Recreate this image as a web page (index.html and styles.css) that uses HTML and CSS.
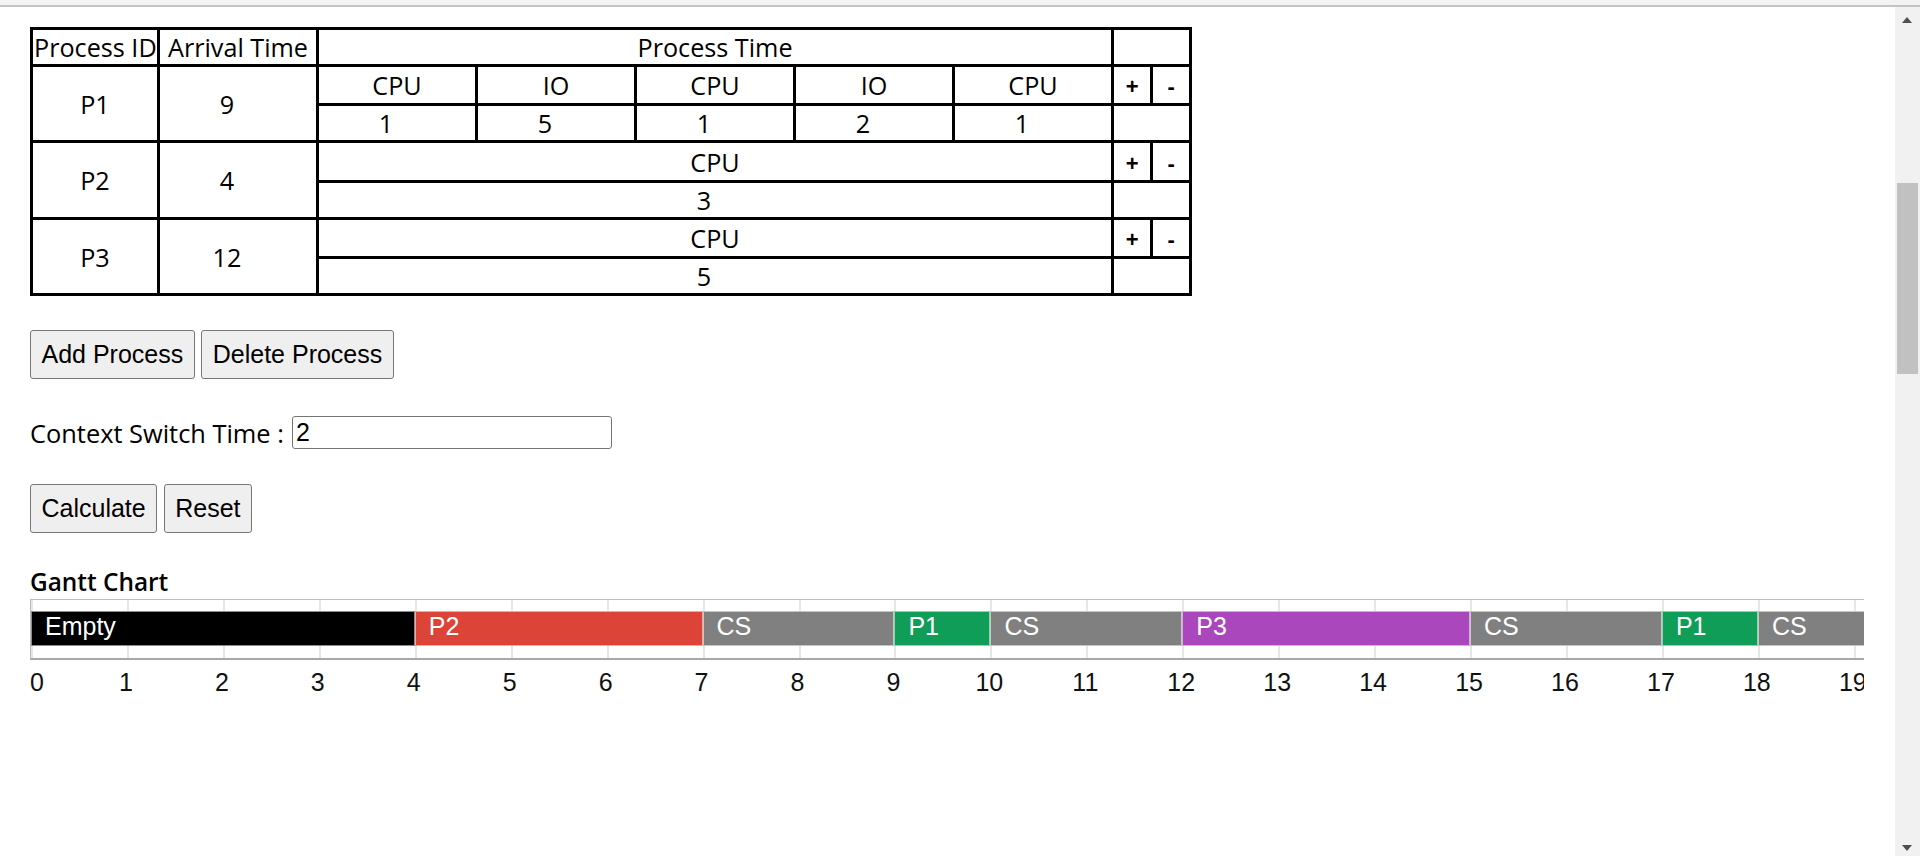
FILE: index.html
```html
<!DOCTYPE html>
<html lang="en">
<head>
<meta charset="utf-8">
<title>CPU Scheduling</title>
<link rel="stylesheet" href="styles.css">
</head>
<body>
<div class="topbar"></div>
<main class="page">
  <table class="proc-table">
    <colgroup>
      <col class="c-id"><col class="c-at">
      <col class="c-pt"><col class="c-pt"><col class="c-pt"><col class="c-pt"><col class="c-pt">
      <col class="c-pm"><col class="c-pm">
    </colgroup>
    <tr class="r-head"><td>Process ID</td><td>Arrival Time</td><td colspan="5">Process Time</td><td colspan="2"></td></tr>
    <tr class="r-type"><td rowspan="2">P1</td><td rowspan="2" class="num">9</td><td>CPU</td><td>IO</td><td>CPU</td><td>IO</td><td>CPU</td><td class="pm">+</td><td class="pm">-</td></tr>
    <tr class="r-val"><td class="num">1</td><td class="num">5</td><td class="num">1</td><td class="num">2</td><td class="num">1</td><td colspan="2"></td></tr>
    <tr class="r-type r-tall"><td rowspan="2">P2</td><td rowspan="2" class="num">4</td><td colspan="5">CPU</td><td class="pm">+</td><td class="pm">-</td></tr>
    <tr class="r-val"><td colspan="5" class="num">3</td><td colspan="2"></td></tr>
    <tr class="r-type"><td rowspan="2">P3</td><td rowspan="2" class="num">12</td><td colspan="5">CPU</td><td class="pm">+</td><td class="pm">-</td></tr>
    <tr class="r-val"><td colspan="5" class="num">5</td><td colspan="2"></td></tr>
  </table>

  <div class="btn-row row-proc">
    <button class="btn">Add Process</button>
    <button class="btn">Delete Process</button>
  </div>

  <div class="cs-row">
    <label class="cs-label" for="cs">Context Switch Time :</label>
    <input id="cs" class="cs-input" type="text" value="2">
  </div>

  <div class="btn-row row-calc">
    <button class="btn">Calculate</button>
    <button class="btn">Reset</button>
  </div>

  <h3 class="gantt-title">Gantt Chart</h3>
  <div class="gantt-clip">
    <div class="gantt-inner">
      <div class="gantt-frame">
        <div class="bars">
          <div class="bar b-empty" style="width:383.76px">Empty</div>
          <div class="bar b-p2" style="width:287.82px">P2</div>
          <div class="bar b-cs" style="width:191.88px">CS</div>
          <div class="bar b-p1" style="width:95.94px">P1</div>
          <div class="bar b-cs" style="width:191.88px">CS</div>
          <div class="bar b-p3" style="width:287.82px">P3</div>
          <div class="bar b-cs" style="width:191.88px">CS</div>
          <div class="bar b-p1" style="width:95.94px">P1</div>
          <div class="bar b-cs" style="width:191.88px">CS</div>
          <div class="bar b-p3" style="width:191.88px">P3</div>
        </div>
      </div>
      <div class="axis">
        <span class="tick first">0</span>
        <span class="tick">1</span><span class="tick">2</span><span class="tick">3</span><span class="tick">4</span>
        <span class="tick">5</span><span class="tick">6</span><span class="tick">7</span><span class="tick">8</span>
        <span class="tick">9</span><span class="tick">10</span><span class="tick">11</span><span class="tick">12</span>
        <span class="tick">13</span><span class="tick">14</span><span class="tick">15</span><span class="tick">16</span>
        <span class="tick">17</span><span class="tick">18</span><span class="tick">19</span><span class="tick">20</span>
        <span class="tick">21</span>
      </div>
    </div>
  </div>
</main>

<div class="vscroll" aria-hidden="true">
  <div class="arrow-up"></div>
  <div class="thumb"></div>
  <div class="arrow-down"></div>
</div>
</body>
</html>
```

FILE: styles.css
```css
* { box-sizing: border-box; }

html, body {
  margin: 0;
  padding: 0;
  height: 100%;
  overflow: hidden;
  background: #fff;
}

body {
  font-family: "Open Sans", "Noto Sans", sans-serif;
  font-size: 25.2px;
  color: #000;
}

.topbar {
  height: 7px;
  background: #f3f3f3;
  border-bottom: 2px solid #c4c4c4;
}

.page {
  padding: 20px 0 0 30px;
}

/* ---------- process table ---------- */
.proc-table {
  border-collapse: collapse;
  table-layout: fixed;
  width: 1161px;
}

.c-id { width: 127px; }
.c-at { width: 159px; }
.c-pt { width: 159px; }
.c-pm { width: 39px; }

.proc-table td {
  border: 3px solid #000;
  padding: 0 1px;
  text-align: center;
  vertical-align: middle;
  line-height: 30px;
  white-space: nowrap;
}

.proc-table td.num {
  padding-right: 23px;
}

.r-head { height: 37px; }
.r-type { height: 39px; }
.r-tall { height: 40px; }
.r-val  { height: 37px; }

.proc-table td.pm {
  font-family: "Liberation Sans", Arial, sans-serif;
  font-weight: 700;
  font-size: 22px;
  padding-top: 4px;
}

/* ---------- controls ---------- */
.btn-row {
  display: flex;
  gap: 6.5px;
}

.row-proc { margin-top: 34px; }
.row-calc { margin-top: 35px; }

.btn {
  font-family: "Liberation Sans", Arial, sans-serif;
  font-size: 25px;
  height: 49px;
  padding: 0 10.5px;
  background: #efefef;
  border: 1px solid #767676;
  border-radius: 3px;
  color: #000;
}

.cs-row {
  display: flex;
  align-items: center;
  gap: 8px;
  margin-top: 37px;
  height: 33px;
}

.cs-label {
  font-size: 25.4px;
}

.cs-input {
  width: 320px;
  height: 33px;
  border: 1px solid #767676;
  border-radius: 3px;
  padding: 0 3px;
  font-family: "Liberation Sans", Arial, sans-serif;
  font-size: 25px;
  color: #000;
}

/* ---------- gantt ---------- */
.gantt-title {
  margin: 32px 0 0;
  font-size: 24.4px;
  font-weight: 600;
  line-height: 33.6px;
}

.gantt-clip {
  width: 1834px;
  overflow: hidden;
}

.gantt-inner {
  width: 2400px;
}

.gantt-frame {
  height: 61px;
  border-top: 1px solid #bdbdbd;
  border-bottom: 2px solid #a8a8a8;
  border-left: 1px solid #bdbdbd;
  padding-top: 11px;
  background: repeating-linear-gradient(90deg, #e6e6e6 0 2px, transparent 2px 95.94px);
}

.bars {
  display: flex;
  height: 35px;
}

.bar {
  flex: none;
  height: 35px;
  border: 1px solid rgba(255, 255, 255, 0.55);
  color: #fff;
  font-family: "Liberation Sans", Arial, sans-serif;
  font-size: 25px;
  line-height: 29px;
  padding-left: 13px;
  white-space: nowrap;
  overflow: hidden;
}

.b-empty { background: #000; }
.b-p2 { background: #db4437; }
.b-cs { background: #808080; }
.b-p1 { background: #0f9d58; }
.b-p3 { background: #ab47bc; }

.axis {
  display: flex;
  margin-top: 8px;
  font-family: "Liberation Sans", Arial, sans-serif;
  font-size: 25px;
  color: #111;
}

.tick {
  flex: none;
  width: 95.94px;
  text-align: center;
}

.tick.first {
  width: 47.97px;
  text-align: left;
  padding-left: 0;
}

/* ---------- scrollbar (overlay) ---------- */
.vscroll {
  position: fixed;
  top: 7px;
  right: 0;
  bottom: 0;
  width: 25px;
  background: #f1f1f1;
}

.vscroll .thumb {
  position: absolute;
  top: 176px;
  left: 2px;
  width: 21px;
  height: 191px;
  background: #c1c1c1;
}

.arrow-up,
.arrow-down {
  position: absolute;
  left: 7px;
  width: 0;
  height: 0;
  border-left: 5.5px solid transparent;
  border-right: 5.5px solid transparent;
}

.arrow-up {
  top: 10px;
  border-bottom: 6px solid #505050;
}

.arrow-down {
  bottom: 5px;
  border-top: 6px solid #505050;
}
```
